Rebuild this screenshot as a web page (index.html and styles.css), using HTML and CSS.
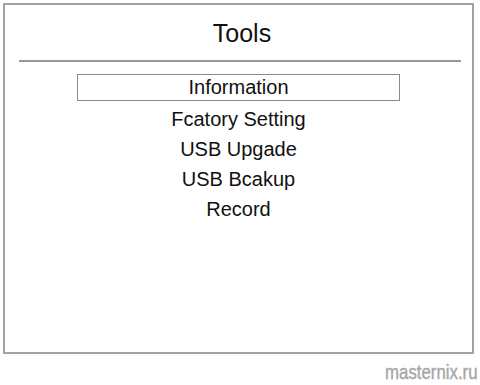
FILE: index.html
```html
<!DOCTYPE html>
<html lang="en">

<head>
    <meta charset="UTF-8">
    <meta name="viewport" content="width=device-width, initial-scale=1.0">
    <title>Tools</title>

    <link rel="stylesheet" href="styles.css">
</head>

<body>
    <div class="screen">
        <div class="frame">
            <h1 class="title">Tools</h1>
            <div class="divider"></div>
            <ul class="menu">
                <li class="current">Information</li>
                <li>Fcatory Setting</li>
                <li>USB Upgade</li>
                <li>USB Bcakup</li>
                <li>Record</li>
            </ul>
        </div>
        <span class="mark">masternix.ru</span>
    </div>
</body>

</html>
```

FILE: styles.css
```css
* {
    margin: 0;
    padding: 0;
    box-sizing: border-box;
}

body {
    background-color: #fff;
    font-family: "Liberation Sans", Arial, sans-serif;
    color: #111;
}

li {
    list-style: none;
}

.screen {
    position: relative;
    width: 480px;
    height: 385px;
    padding: 3px 0 0 3px;
}

.frame {
    width: 471px;
    height: 351px;
    border: 2px solid #a2a2a2;
    padding-top: 13px;
}

.title {
    font-size: 25px;
    font-weight: normal;
    line-height: 30px;
    text-align: center;
    padding-left: 7px;
}

.divider {
    margin: 12px 11px 0 14px;
    border-top: 2px solid #999;
}

.menu {
    margin-top: 12px;
    font-size: 20px;
    line-height: 30px;
    text-align: center;
}

.menu li.current {
    width: 323px;
    height: 27px;
    margin: 0 auto 3px;
    line-height: 25px;
    border: 1px solid #8a8a8a;
}

/* watermark, squeezed to the narrow face of the original */
.mark {
    position: absolute;
    top: 360px;
    right: 2px;
    font-size: 21px;
    line-height: 24px;
    color: #a6a6a6;
    -webkit-text-stroke: 0.4px #a6a6a6;
    transform: scaleX(0.8);
    transform-origin: right center;
}
```
